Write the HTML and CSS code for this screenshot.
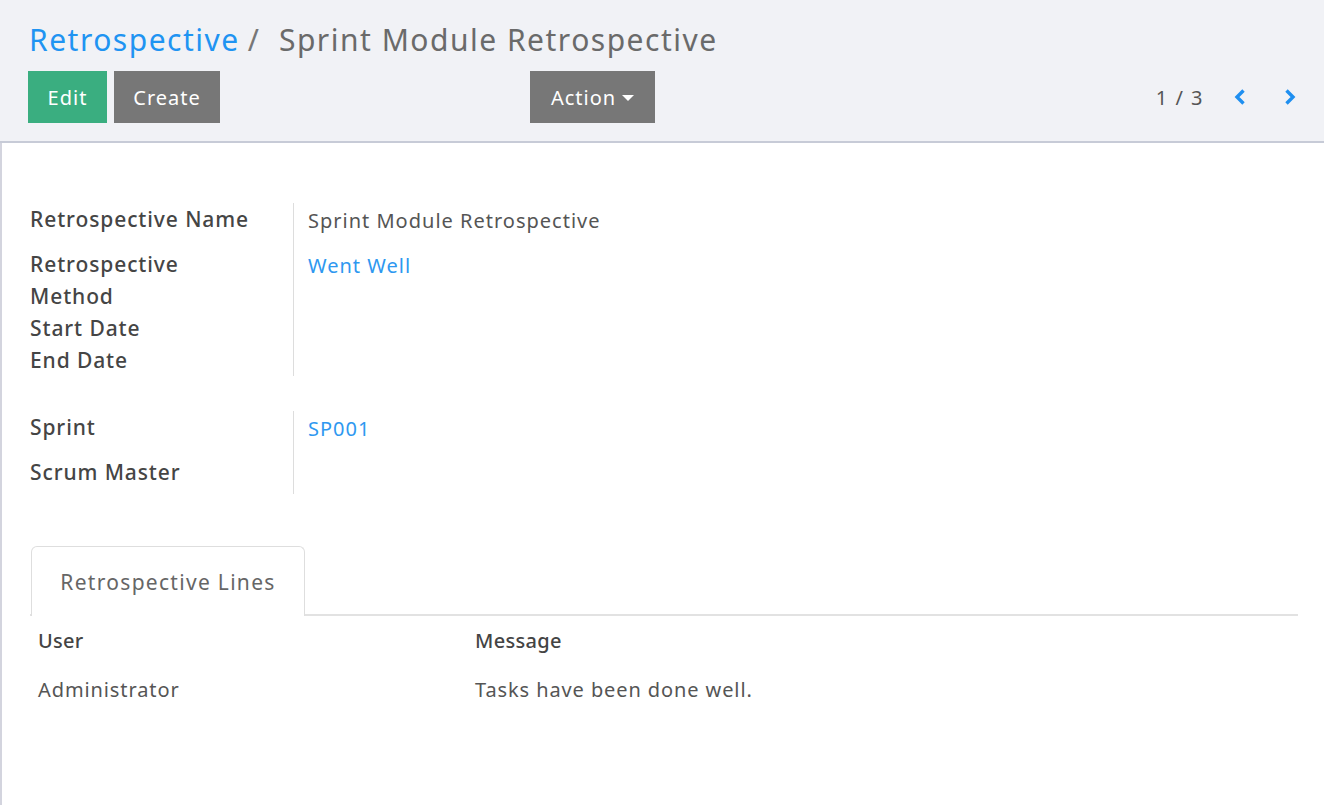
FILE: index.html
```html
<!DOCTYPE html>
<html>
<head>
<meta charset="utf-8">
<link rel="stylesheet" href="styles.css">
</head>
<body>
<div class="control-panel">
  <div class="breadcrumb">
    <a class="crumb-link">Retrospective</a><span class="crumb-sep">/</span><span class="crumb-current">Sprint Module Retrospective</span>
  </div>
  <div class="cp-row">
    <div class="cp-buttons">
      <button class="btn btn-primary">Edit</button>
      <button class="btn btn-secondary">Create</button>
    </div>
    <button class="btn btn-secondary btn-action">Action <span class="caret"></span></button>
    <div class="cp-spacer"></div>
    <div class="pager">
      <span class="pager-value">1 / 3</span>
      <span class="pager-btn">
        <svg width="14" height="18" viewBox="0 0 14 18"><path d="M10.5 2.5 L4 9 L10.5 15.5" fill="none" stroke="#1f8ff0" stroke-width="3.4" stroke-linejoin="miter"/></svg>
      </span>
      <span class="pager-btn">
        <svg width="14" height="18" viewBox="0 0 14 18"><path d="M3.5 2.5 L10 9 L3.5 15.5" fill="none" stroke="#1f8ff0" stroke-width="3.4" stroke-linejoin="miter"/></svg>
      </span>
    </div>
  </div>
</div>
<div class="content">
  <div class="group group-one">
    <div class="labels">
      <div class="label row-name">Retrospective Name</div>
      <div class="label row-method">Retrospective<br>Method</div>
      <div class="label row-line">Start Date</div>
      <div class="label row-line">End Date</div>
    </div>
    <div class="values">
      <div class="value row-name">Sprint Module Retrospective</div>
      <div class="value row-method"><a class="link">Went Well</a></div>
      <div class="value row-line"></div>
      <div class="value row-line"></div>
    </div>
  </div>
  <div class="group group-two">
    <div class="labels">
      <div class="label row-name">Sprint</div>
      <div class="label row-line">Scrum Master</div>
    </div>
    <div class="values">
      <div class="value row-name"><a class="link">SP001</a></div>
      <div class="value row-line"></div>
    </div>
  </div>
  <div class="notebook">
    <div class="tabs">
      <div class="tab active">Retrospective Lines</div>
    </div>
    <table class="lines">
      <thead>
        <tr><th class="col-user">User</th><th>Message</th></tr>
      </thead>
      <tbody>
        <tr><td class="col-user">Administrator</td><td>Tasks have been done well.</td></tr>
      </tbody>
    </table>
  </div>
</div>
</body>
</html>
```
FILE: styles.css
```css
* { box-sizing: border-box; }
html, body { margin: 0; padding: 0; background: #ffffff; }
body {
  font-family: "Noto Sans", "Open Sans", sans-serif;
  color: #555555;
  width: 1324px;
  height: 805px;
  overflow: hidden;
}
a { text-decoration: none; cursor: pointer; }

.control-panel {
  background: #f1f2f6;
  border-bottom: 2px solid #c7cbd7;
  height: 143px;
  padding: 19px 27px 0 28px;
}
.breadcrumb {
  font-size: 30px;
  line-height: 42px;
  height: 42px;
  padding-left: 1px;
  white-space: nowrap;
  letter-spacing: 1.5px;
}
.crumb-link { color: #1f94f2; }
.crumb-sep { color: #777777; margin: 0 20px 0 8px; letter-spacing: 0; }
.crumb-current { color: #6a6a6a; }

.cp-row {
  display: flex;
  align-items: center;
  margin-top: 10px;
  height: 52px;
}
.cp-buttons { display: flex; gap: 7px; width: 502px; }
.btn {
  border: none;
  height: 52px;
  font-family: inherit;
  font-size: 20px;
  letter-spacing: 1px;
  color: #ffffff;
  padding: 0;
  cursor: pointer;
}
.btn-primary { background: #3aae80; width: 79px; }
.btn-secondary { background: #777777; }
.cp-buttons .btn-secondary { width: 106px; }
.btn-action { width: 125px; display: flex; align-items: center; justify-content: center; gap: 6px; }
.caret {
  display: inline-block;
  width: 0; height: 0;
  border-left: 6px solid transparent;
  border-right: 6px solid transparent;
  border-top: 6px solid #ffffff;
  margin-top: 2px;
}
.cp-spacer { flex: 1; }
.pager { display: flex; align-items: center; }
.pager-value { font-size: 20px; color: #555555; margin-right: 29px; letter-spacing: 1.5px; }
.pager-btn { display: flex; width: 14px; height: 18px; }
.pager-btn + .pager-btn { margin-left: 36px; }

.content {
  border-left: 2px solid #d3d4de;
  height: 662px;
  padding: 60px 26px 0 28px;
}
.group { display: flex; }
.labels { width: 263px; }
.values { border-left: 1px solid #dddddd; flex: 1; padding-left: 14px; }
.label {
  font-size: 21px;
  font-weight: 500;
  color: #454545;
  line-height: 32px;
  letter-spacing: 0.9px;
}
.value {
  font-size: 20px;
  line-height: 32px;
  color: #555555;
  padding-top: 2px;
  letter-spacing: 1px;
}
.row-name { height: 45px; }
.row-method { height: 64px; }
.row-line { height: 32px; }
.group-two { margin-top: 35px; }
.group-two .row-name { height: 45px; }
.group-two .row-line { height: 38px; }
.link { color: #2e98f0; }

.notebook { margin-top: 52px; }
.tabs {
  border-bottom: 2px solid #e2e2e2;
  height: 70px;
  display: flex;
  padding-left: 1px;
}
.tab {
  width: 274px;
  height: 70px;
  border: 1px solid #dedede;
  border-bottom: none;
  border-radius: 6px 6px 0 0;
  background: #ffffff;
  font-size: 21px;
  letter-spacing: 1.3px;
  color: #666666;
  display: flex;
  align-items: center;
  justify-content: center;
  margin-bottom: -2px;
}
.lines { border-collapse: collapse; width: 100%; margin-top: 4px; }
.lines th, .lines td {
  text-align: left;
  font-size: 20px;
  padding: 6px 8px;
  line-height: 30px;
}
.lines th { font-weight: 500; color: #444444; letter-spacing: 0.3px; }
.lines td { color: #555555; padding-top: 13px; letter-spacing: 0.9px; }
.col-user { width: 437px; }
```
